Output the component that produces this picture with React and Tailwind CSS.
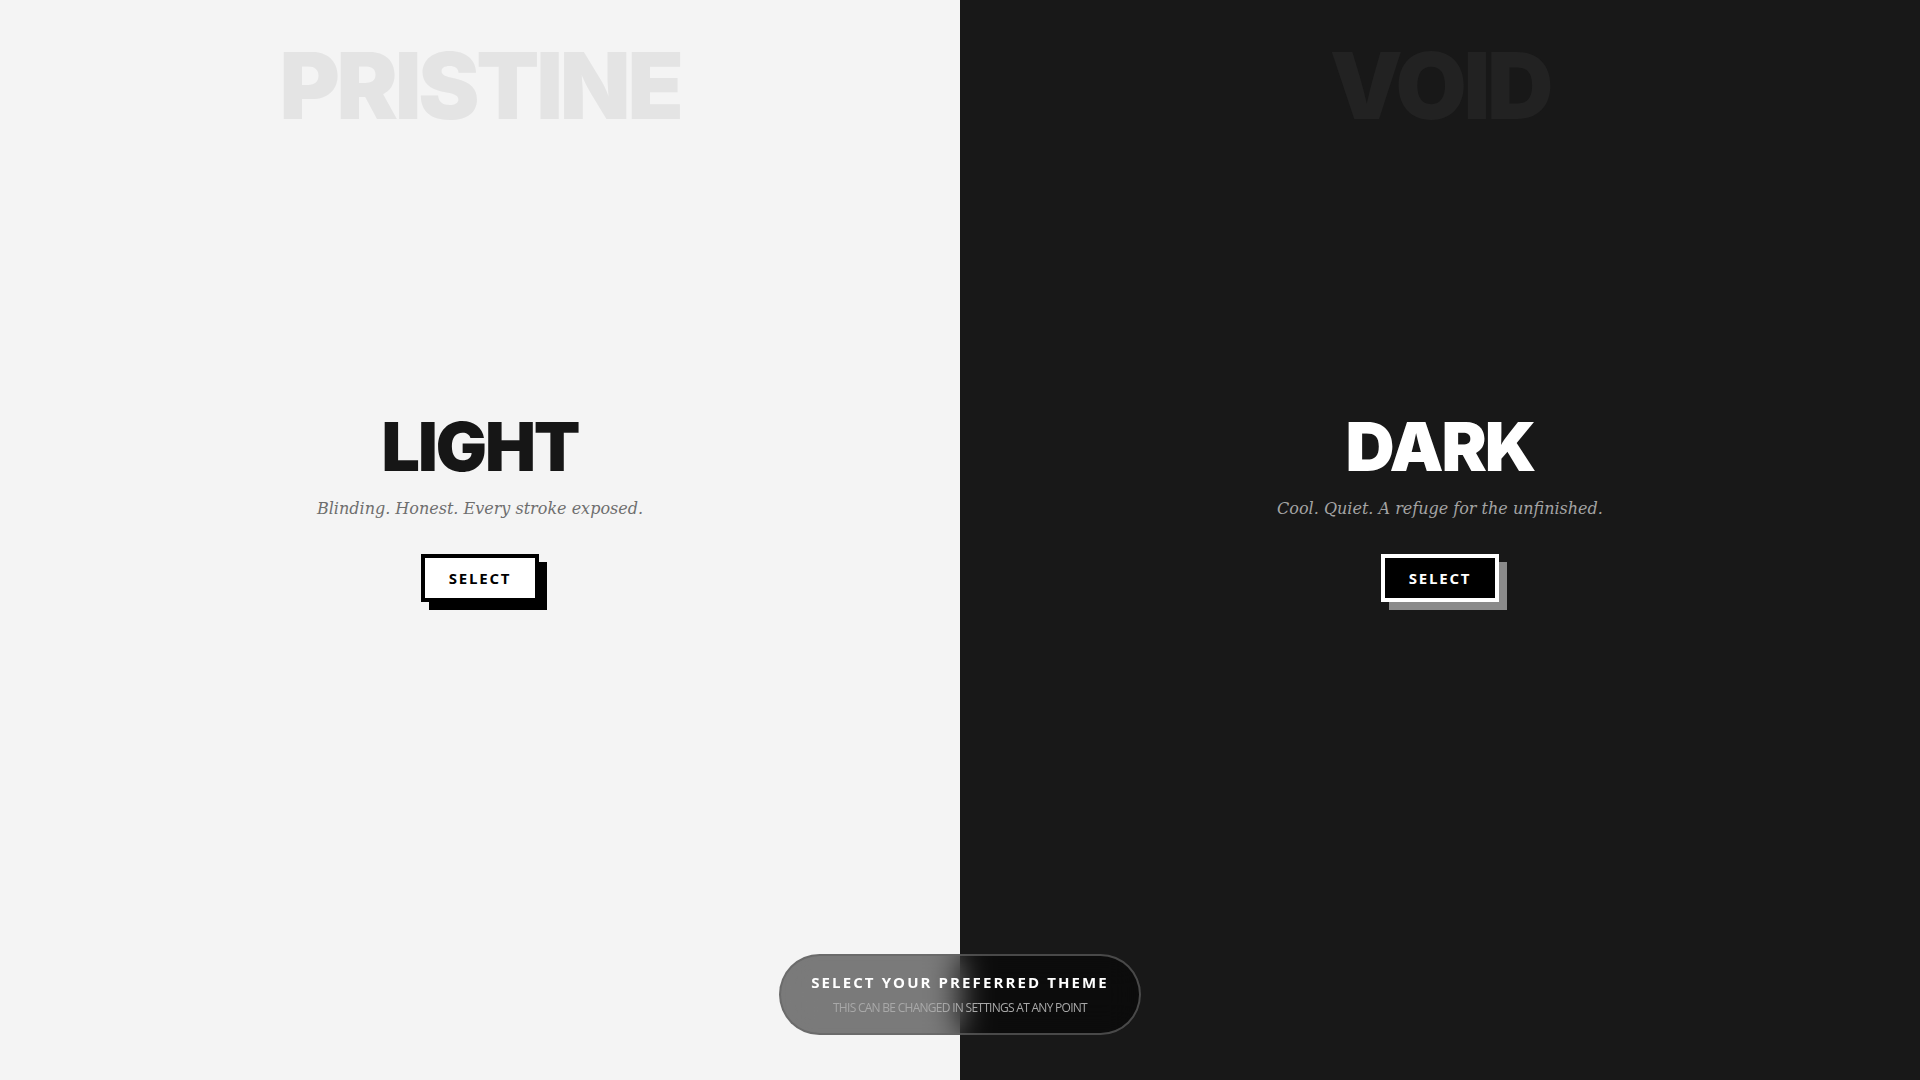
import React from "react";

const themes = [
  {
    key: "light",
    ghost: "PRISTINE",
    title: "LIGHT",
    tagline: "Blinding. Honest. Every stroke exposed.",
    panel: "bg-[#f4f4f4]",
    ghostText: "text-[#e4e4e4]",
    titleText: "text-[#161616]",
    taglineText: "text-[#6e6e6e]",
    button:
      "bg-white text-black border-black shadow-[8px_8px_0_0_#000000]",
  },
  {
    key: "dark",
    ghost: "VOID",
    title: "DARK",
    tagline: "Cool. Quiet. A refuge for the unfinished.",
    panel: "bg-[#181818]",
    ghostText: "text-[#222222]",
    titleText: "text-white",
    taglineText: "text-[#a4a4a4]",
    button:
      "bg-black text-white border-white shadow-[8px_8px_0_0_#8a8a8a]",
  },
];

const ThemePanel = ({ theme }) => (
  <section className={`flex-1 flex flex-col items-center ${theme.panel}`}>
    {/* фоновое слово */}
    <div
      className={`pt-[40px] text-[92px] leading-none font-black tracking-[-0.035em] select-none ${theme.ghostText}`}
      style={{ fontFamily: "Inter, 'Noto Sans', sans-serif" }}
    >
      {theme.ghost}
    </div>

    <div className="mt-[280px] flex flex-col items-center">
      <h1
        className={`text-[68px] leading-none font-black tracking-[-0.03em] ${theme.titleText}`}
        style={{ fontFamily: "Inter, 'Noto Sans', sans-serif" }}
      >
        {theme.title}
      </h1>
      <p
        className={`mt-[17px] text-[16px] leading-6 italic ${theme.taglineText}`}
        style={{ fontFamily: "'DejaVu Serif', 'Liberation Serif', serif" }}
      >
        {theme.tagline}
      </p>
      <button
        className={`mt-[33px] border-4 px-[24px] py-[10px] text-[15px] leading-5 font-bold tracking-[0.12em] ${theme.button}`}
        style={{ fontFamily: "'Open Sans', 'Noto Sans', sans-serif" }}
      >
        SELECT
      </button>
    </div>
  </section>
);

export default function App() {
  return (
    <div className="relative flex w-full h-screen overflow-hidden">
      {themes.map((t) => (
        <ThemePanel key={t.key} theme={t} />
      ))}

      {/* подсказка внизу */}
      <div
        className="absolute left-1/2 -translate-x-1/2 bottom-[45px] w-[362px] h-[81px] rounded-full border-2 border-[#646464]/70 bg-black/50 backdrop-blur-lg flex flex-col items-center justify-center"
        style={{ fontFamily: "'Open Sans', 'Noto Sans', sans-serif" }}
      >
        <div className="-mt-[2px] text-[15px] leading-5 font-bold tracking-[0.14em] text-white">
          SELECT YOUR PREFERRED THEME
        </div>
        <div className="mt-[8px] text-[12px] leading-4 tracking-[-0.06em] text-[#a8a8a8]">
          THIS CAN BE CHANGED IN SETTINGS AT ANY POINT
        </div>
      </div>
    </div>
  );
}
